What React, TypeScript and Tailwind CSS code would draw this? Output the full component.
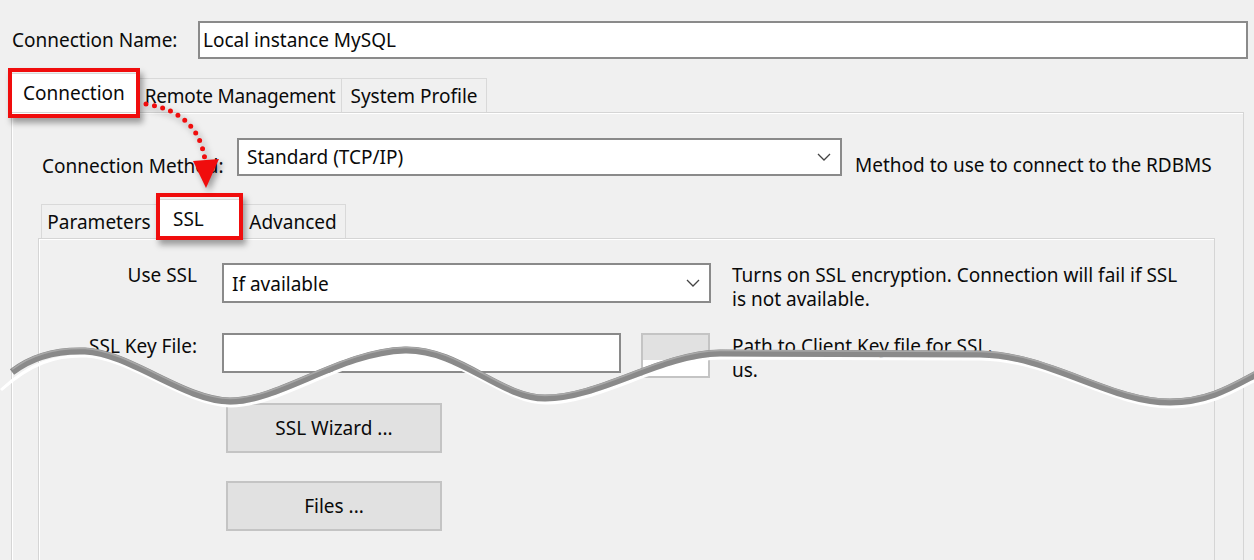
import React from 'react'

function Chevron() {
  return (
    <svg width="14" height="8" viewBox="0 0 14 8" className="shrink-0">
      <polyline points="1,1 7,7 13,1" fill="none" stroke="#444" strokeWidth="1.3" />
    </svg>
  )
}

function Tab({ label, className }: { label: string; className: string }) {
  return (
    <div className={`h-[34px] border border-b-0 border-[#d9d9d9] bg-[#f0f0f0] flex items-center justify-center ${className}`}>
      {label}
    </div>
  )
}

function GrayButton({ label }: { label: string }) {
  return (
    <div className="w-[216px] h-[50px] bg-[#e1e1e1] border-2 border-[#c4c4c4] flex items-center justify-center">
      {label}
    </div>
  )
}

const wave =
  'C30 28 55 20 85 21 C130 23 185 71 230 71 C280 71 340 22 405 20 C460 19 500 68 545 68 C600 68 660 24 720 23 L980 24 C1050 25 1110 72 1170 72 C1210 72 1235 55 1260 42'

export default function App() {
  return (
    <div className="relative w-[1254px] h-[560px] overflow-hidden bg-[#f0f0f0] text-[19px] leading-[24px] text-[#0a0a0a] font-['Noto_Sans',sans-serif]">
      {/* connection name */}
      <div className="flex items-center h-[38px] mt-[21px] pl-[12px] pr-[6px]">
        <span className="w-[186px]">Connection Name:</span>
        <div className="flex-1 h-full border-2 border-[#8a8a8a] bg-white pl-[3px] flex items-center">
          Local instance MySQL
        </div>
      </div>

      {/* top tabs */}
      <div className="flex items-end h-[39px] mt-[14px] pl-[10px]">
        <div className="w-[128px] h-[39px] bg-white border border-b-0 border-[#d9d9d9] pl-[12px] flex items-center">
          Connection
        </div>
        <Tab label="Remote Management" className="w-[204px] tracking-[-0.2px]" />
        <Tab label="System Profile" className="w-[145px] border-l-0" />
      </div>

      {/* outer tab page */}
      <div className="ml-[11px] w-[1233px] h-[460px] border border-[#d5d5d5] shadow-[inset_1px_1px_0_#ffffff] pl-[26px] pt-[25px]">
        <div className="flex items-start h-[38px] pl-[4px]">
          <span className="w-[195px] pt-[16px]">Connection Method:</span>
          <div className="w-[605px] h-[38px] border-2 border-[#8a8a8a] bg-white pl-[8px] pr-[9px] flex items-center justify-between">
            <span>Standard (TCP/IP)</span>
            <Chevron />
          </div>
          <span className="ml-[13px] pt-[15px]">Method to use to connect to the RDBMS</span>
        </div>

        {/* inner tabs */}
        <div className="flex items-end h-[39px] mt-[23px] pl-[3px]">
          <Tab label="Parameters" className="w-[116px]" />
          <div className="w-[84px] h-[39px] bg-white border border-b-0 border-[#d9d9d9] pl-[15px] flex items-center">
            SSL
          </div>
          <Tab label="Advanced" className="w-[105px] border-l-0" />
        </div>

        {/* inner tab page */}
        <div className="w-[1177px] h-[330px] border border-[#d5d5d5] shadow-[inset_1px_1px_0_#ffffff] pt-[24px]">
          <div className="flex items-start h-[40px]">
            <span className="w-[158px] text-right">Use SSL</span>
            <div className="ml-[25px] w-[489px] h-[40px] border-2 border-[#8a8a8a] bg-white pl-[8px] pr-[9px] flex items-center justify-between">
              <span className="pt-[2px]">If available</span>
              <Chevron />
            </div>
            <div className="ml-[21px]">
              <div>Turns on SSL encryption. Connection will fail if SSL</div>
              <div>is not available.</div>
            </div>
          </div>

          <div className="flex items-start h-[45px] mt-[30px]">
            <span className="w-[158px] text-right pt-[1px]">SSL Key File:</span>
            <div className="ml-[25px] w-[399px] h-[40px] border-2 border-[#8a8a8a] bg-white" />
            <div className="ml-[20px] w-[69px] h-[45px] border-2 border-[#c4c4c4] bg-[linear-gradient(#e1e1e1_0,#e1e1e1_62%,#ffffff_62%)]" />
            <div className="ml-[22px] pt-[1px]">
              <div>Path to Client Key file for SSL.</div>
              <div>us.</div>
            </div>
          </div>

          <div className="ml-[187px] mt-[25px] flex flex-col gap-[28px]">
            <GrayButton label="SSL Wizard ..." />
            <GrayButton label="Files ..." />
          </div>
        </div>
      </div>

      {/* red highlight boxes */}
      <div className="absolute left-[8px] top-[68px] w-[132px] h-[50px] border-[4px] border-[#f00d0d] shadow-[3px_5px_6px_rgba(0,0,0,0.35)]" />
      <div className="absolute left-[156px] top-[193px] w-[87px] h-[47px] border-[4px] border-[#f00d0d] shadow-[3px_5px_6px_rgba(0,0,0,0.35)]" />

      {/* dotted arrow */}
      <svg
        className="absolute left-0 top-0 drop-shadow-[3px_4px_3px_rgba(0,0,0,0.35)]"
        width="260"
        height="200"
        viewBox="0 0 260 200"
      >
        <path
          d="M146 104 Q198 112 205 160"
          fill="none"
          stroke="#f00d0d"
          strokeWidth="5"
          strokeLinecap="round"
          strokeDasharray="0 8.5"
        />
        <polygon points="193,161 219,159 206,188" fill="#f00d0d" />
      </svg>

      {/* torn edge wave */}
      <svg className="absolute left-0 top-[330px]" width="1254" height="90" viewBox="0 0 1254 90">
        <path d={`M0 55 ${wave}`} fill="none" stroke="#ffffff" strokeWidth="3" transform="translate(1 5)" />
        <path d={`M12 42 ${wave}`} fill="none" stroke="#8a8a8a" strokeWidth="7" />
        <path d={`M12 42 ${wave}`} fill="none" stroke="#a8a8a8" strokeWidth="1.5" transform="translate(0 -2.5)" />
      </svg>
    </div>
  )
}
